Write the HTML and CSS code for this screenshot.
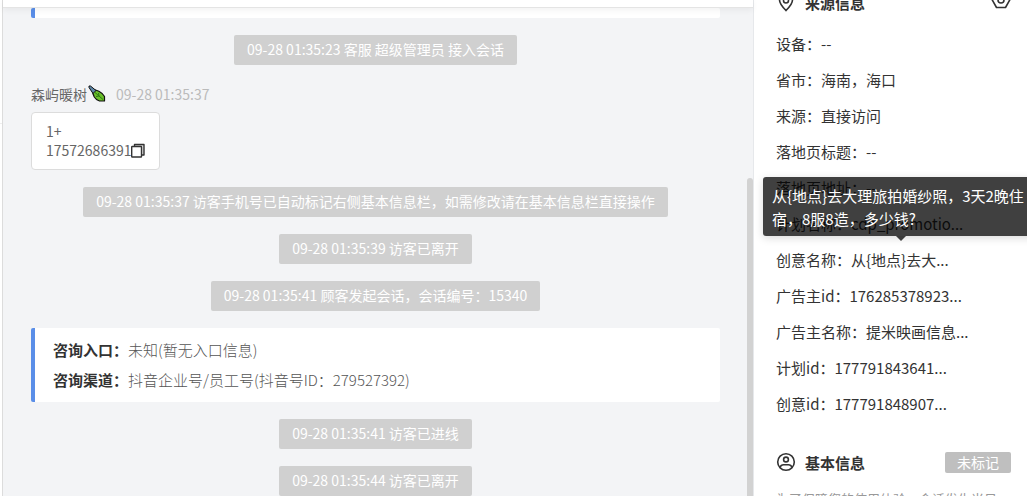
FILE: index.html
```html
<!DOCTYPE html>
<html lang="zh-CN">
<head>
    <meta charset="UTF-8">
    <meta name="viewport" content="width=device-width, initial-scale=1.0">
    <title>在线会话</title>
    <link rel="stylesheet" href="styles.css">
</head>
<body>
    <div class="rail">
        <div class="rail-item"></div>
    </div>

    <main class="chat">
        <div class="chat-header"></div>
        <div class="chat-body">
            <div class="messages">
                <div class="entry-card entry-card-end"></div>
                <p class="notice">09-28 01:35:23 客服 超级管理员 接入会话</p>

                <div class="message">
                    <div class="message-meta">
                        <span class="visitor-name">森屿暖树</span>
                        <svg class="leaf" width="18" height="18" viewBox="0 0 18 18" aria-hidden="true">
                            <path d="M4.500 4.500 C8 4.500 14 7 16.500 11.500 V16 H11.500 C7 14.500 4.500 10 4.500 4.500 Z" fill="#6abf2a" stroke="#111" stroke-width="1.200" stroke-linejoin="round"/>
                            <path d="M1 1 H2.500 L8 5.500 L5 8.500 L1 2.500 Z" fill="#5c86a8" stroke="#111" stroke-width="1" stroke-linejoin="round"/>
                            <path d="M7 7.500 L15 14.500 M10.500 8 L11 11 L8 11.500" fill="none" stroke="#2c7a12" stroke-width="1"/>
                        </svg>
                        <time class="message-time">09-28 01:35:37</time>
                    </div>
                    <div class="bubble">
                        <div>1+</div>
                        <div class="phone">
                            <span>17572686391</span>
                            <button class="icon-button" type="button" aria-label="复制">
                                <svg width="14" height="16" viewBox="0 0 14 16" fill="none" stroke="#333" stroke-width="1.400" stroke-linejoin="round">
                                    <path d="M3.500 3.500 V1.500 H13 V12 H10.500" fill="#ddd"/>
                                    <rect x="0.700" y="3.500" width="9.800" height="10.500" rx="0.500" fill="#fff"/>
                                </svg>
                            </button>
                        </div>
                    </div>
                </div>

                <p class="notice">09-28 01:35:37 访客手机号已自动标记右侧基本信息栏，如需修改请在基本信息栏直接操作</p>
                <p class="notice">09-28 01:35:39 访客已离开</p>
                <p class="notice">09-28 01:35:41 顾客发起会话，会话编号：15340</p>

                <div class="entry-card">
                    <p><strong>咨询入口：</strong>未知(暂无入口信息)</p>
                    <p><strong>咨询渠道：</strong>抖音企业号/员工号(抖音号ID：279527392)</p>
                </div>

                <p class="notice">09-28 01:35:41 访客已进线</p>
                <p class="notice">09-28 01:35:44 访客已离开</p>
            </div>
            <div class="scrollbar"></div>
        </div>
    </main>

    <aside class="sidebar">
        <section>
            <header class="section-title source-title">
                <svg width="20" height="20" viewBox="0 0 20 20" fill="none" stroke="#333" stroke-width="1.600">
                    <path d="M10 18.500 C6 14.500 3.500 11.500 3.500 8 A6.500 6.500 0 0 1 16.500 8 C16.500 11.500 14 14.500 10 18.500 Z"/>
                    <circle cx="10" cy="8.500" r="2.500"/>
                </svg>
                <h2>来源信息</h2>
                <button class="icon-button push" type="button" aria-label="设置">
                    <svg width="20" height="20" viewBox="0 0 20 20" fill="none" stroke="#333" stroke-width="1.600" stroke-linejoin="round">
                        <path d="M5.500 0 H14.500 L19 7.500 L14.500 15.500 H5.500 L1 7.500 Z"/>
                        <circle cx="10" cy="8" r="3"/>
                    </svg>
                </button>
            </header>
            <ul class="info-list">
                <li>设备：--</li>
                <li>省市：海南，海口</li>
                <li>来源：直接访问</li>
                <li>落地页标题：--</li>
                <li>落地页地址：--</li>
                <li>计划名称：cdp_promotio...</li>
                <li class="has-tooltip" aria-describedby="creative-name">
                    创意名称：从{地点}去大...
                    <div class="tooltip" id="creative-name" role="tooltip">从{地点}去大理旅拍婚纱照，3天2晚住宿，8服8造，多少钱?</div>
                </li>
                <li>广告主id：176285378923...</li>
                <li>广告主名称：提米映画信息...</li>
                <li>计划id：177791843641...</li>
                <li>创意id：177791848907...</li>
            </ul>
        </section>

        <section class="basic">
            <header class="section-title">
                <svg width="20" height="20" viewBox="0 0 20 20" fill="none" stroke="#333" stroke-width="1.600">
                    <circle cx="10" cy="10" r="8.300"/>
                    <circle cx="10" cy="7.500" r="2.400"/>
                    <path d="M4 15.500 Q5 12.700 7.500 12.700 H12.500 Q15 12.700 16 15.500"/>
                </svg>
                <h2>基本信息</h2>
                <span class="tag push">未标记</span>
            </header>
            <p class="hint">为了保障您的使用体验，会话发生当日</p>
        </section>
    </aside>
</body>
</html>
```
FILE: styles.css
```css
:root {
    --text-color: #333;
    --muted-color: #bbb;
    --chat-bg-color: #f3f4f6;
    --notice-bg-color: #d0d0d0;
    --accent-color: #5a8ee8;
    --border-color: #dcdcdc;
}

* {
    box-sizing: border-box;
}

body {
    display: flex;
    height: 100vh;
    margin: 0;
    overflow: hidden;
    background-color: #fff;
    color: var(--text-color);
    font-family: "Noto Sans CJK SC", sans-serif;
    font-size: 15px;
}

p, h2, ul {
    margin: 0;
    padding: 0;
}

.icon-button {
    display: flex;
    padding: 0;
    border: none;
    background: none;
    cursor: pointer;
}

.rail {
    flex: none;
    width: 3px;
    border-right: 1px solid var(--border-color);
}

.rail-item {
    height: 124px;
    border-bottom: 1px solid #eee;
}

/* 会话区域 */
.chat {
    display: flex;
    flex: 1;
    flex-direction: column;
    min-width: 0;
    background-color: var(--chat-bg-color);
}

.chat-header {
    flex: none;
    z-index: 1;
    height: 8px;
    border-bottom: 1px solid #e4e4e4;
    background-color: #fff;
    box-shadow: 0 2px 6px rgba(0, 0, 0, 0.06);
}

.chat-body {
    display: flex;
    flex: 1;
    min-height: 0;
}

.messages {
    display: flex;
    flex: 1;
    flex-direction: column;
    align-items: center;
    gap: 17px;
    min-width: 0;
    padding: 0 27px 0 28px;
}

.messages > * {
    flex: none;
}

.notice {
    padding: 0 13px 1px;
    border-radius: 2px;
    background-color: var(--notice-bg-color);
    color: #fff;
    font-size: 14px;
    line-height: 29px;
}

.message {
    align-self: stretch;
    color: #666;
    font-size: 14px;
}

.message-meta {
    display: flex;
    align-items: center;
    height: 30px;
    padding-bottom: 6px;
}

.leaf {
    margin-left: 1px;
}

.message-time {
    margin-left: 10px;
    color: var(--muted-color);
}

.bubble {
    width: fit-content;
    padding: 9px 14px;
    border: 1px solid var(--border-color);
    border-radius: 4px;
    background-color: #fff;
    line-height: 19px;
}

.phone {
    display: flex;
    align-items: center;
}

.entry-card {
    align-self: stretch;
    padding: 7px 18px;
    border-left: 4px solid var(--accent-color);
    border-radius: 2px;
    background-color: #fff;
    color: #555;
    font-weight: 300;
    line-height: 30px;
}

.entry-card strong {
    color: var(--text-color);
    font-weight: 700;
}

.entry-card-end {
    height: 10px;
    padding: 0;
}

.scrollbar {
    width: 6px;
    margin-top: 170px;
    border-radius: 3px 3px 0 0;
    background-color: #d2d2d2;
}

/* 访客信息 */
.sidebar {
    flex: none;
    width: 274px;
    padding: 0 16px 0 22px;
    border-left: 1px solid #e6e8eb;
}

.section-title {
    display: flex;
    align-items: center;
    height: 24px;
}

.section-title h2 {
    margin-left: 9px;
    font-size: 15px;
    font-weight: 700;
}

.source-title {
    margin-top: -10px;
}

.push {
    margin-left: auto;
}

.info-list {
    padding-top: 12px;
    list-style: none;
    line-height: 36px;
}

.has-tooltip {
    position: relative;
}

.tooltip {
    position: absolute;
    bottom: 100%;
    left: -13px;
    width: 276px;
    margin-bottom: 6px;
    padding: 7px 9px 6px;
    border-radius: 3px;
    background-color: rgba(0, 0, 0, 0.75);
    box-shadow: 0 2px 8px rgba(0, 0, 0, 0.15);
    color: #fff;
    line-height: 23px;
}

.tooltip::after {
    content: "";
    position: absolute;
    top: 100%;
    left: 50%;
    margin-left: -5px;
    border: 5px solid transparent;
    border-top-color: rgba(0, 0, 0, 0.75);
    border-bottom: none;
}

.basic {
    padding-top: 28px;
}

.tag {
    padding: 0 12px;
    border-radius: 2px;
    background-color: #bfbfbf;
    color: #fff;
    font-size: 14px;
    line-height: 21px;
}

.hint {
    margin-top: 15px;
    color: #999;
    font-size: 13px;
    line-height: 20px;
    white-space: nowrap;
}
```
